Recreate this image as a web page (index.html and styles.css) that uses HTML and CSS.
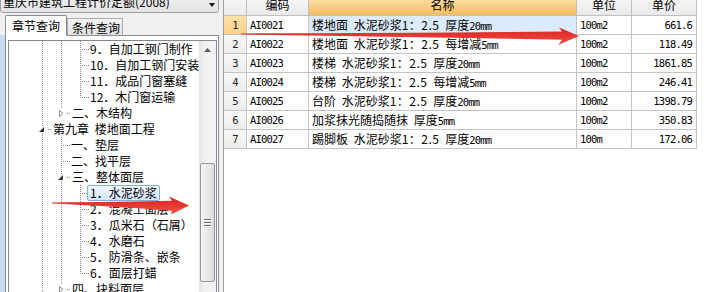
FILE: index.html
```html
<!DOCTYPE html>
<html lang="zh-CN">
<head>
<meta charset="utf-8">
<title>定额查询</title>
<link rel="stylesheet" href="styles.css">
</head>
<body>
<div class="app">
  <aside class="left">
    <div class="combo">
      <span class="combo-text">重庆市建筑工程计价定额(2008)</span>
      <span class="combo-arrow"></span>
    </div>
    <div class="tabs">
      <div class="tab active">章节查询</div>
      <div class="tab">条件查询</div>
    </div>
    <div class="tab-body">
      <div class="tree-box">
        <div class="tree">
          <div class="row"><i class="g v"></i><i class="g v"></i><i class="g t"></i><span>9．自加工钢门制作</span></div>
          <div class="row"><i class="g v"></i><i class="g v"></i><i class="g t"></i><span>10．自加工钢门安装</span></div>
          <div class="row"><i class="g v"></i><i class="g v"></i><i class="g t"></i><span>11．成品门窗塞缝</span></div>
          <div class="row"><i class="g v"></i><i class="g v"></i><i class="g l"></i><span>12．木门窗运输</span></div>
          <div class="row"><i class="g v"></i><i class="g xc-end"><svg class="ico-closed" width="5" height="7" viewBox="0 0 5 7"><polygon points="0.5,0.5 4,3.5 0.5,6.5" fill="#fff" stroke="#8c8c8c"/></svg></i><span class="after-x">二、木结构</span></div>
          <div class="row"><i class="g xo"><svg class="ico-open" width="5" height="5" viewBox="0 0 5 5"><polygon points="5,0 5,5 0,5" fill="#333"/></svg></i><span class="after-x">第九章 楼地面工程</span></div>
          <div class="row"><i class="g v"></i><i class="g t"></i><span>一、垫层</span></div>
          <div class="row"><i class="g v"></i><i class="g t"></i><span>二、找平层</span></div>
          <div class="row"><i class="g v"></i><i class="g xo"><svg class="ico-open" width="5" height="5" viewBox="0 0 5 5"><polygon points="5,0 5,5 0,5" fill="#333"/></svg></i><span class="after-x">三、整体面层</span></div>
          <div class="row"><i class="g v"></i><i class="g v"></i><i class="g t"></i><span class="sel">1．水泥砂浆</span></div>
          <div class="row"><i class="g v"></i><i class="g v"></i><i class="g t"></i><span>2．混凝土面层</span></div>
          <div class="row"><i class="g v"></i><i class="g v"></i><i class="g t"></i><span>3．瓜米石（石屑）</span></div>
          <div class="row"><i class="g v"></i><i class="g v"></i><i class="g t"></i><span>4．水磨石</span></div>
          <div class="row"><i class="g v"></i><i class="g v"></i><i class="g t"></i><span>5．防滑条、嵌条</span></div>
          <div class="row"><i class="g v"></i><i class="g v"></i><i class="g l"></i><span>6．面层打蜡</span></div>
          <div class="row"><i class="g v"></i><i class="g xc"><svg class="ico-closed" width="5" height="7" viewBox="0 0 5 7"><polygon points="0.5,0.5 4,3.5 0.5,6.5" fill="#fff" stroke="#8c8c8c"/></svg></i><span class="after-x">四、块料面层</span></div>
        </div>
        <div class="vscroll">
          <div class="sb-up"><svg width="7" height="4" viewBox="0 0 7 4"><polygon points="0,4 3.5,0 7,4" fill="#5a5a5a"/></svg></div>
          <div class="sb-thumb"><svg width="8" height="8" viewBox="0 0 8 8"><path d="M0 0.5H7M0 3.5H7M0 6.5H7" stroke="#6a6a6a"/><path d="M1 1.5H8M1 4.5H8M1 7.5H8" stroke="#fbfbfb"/></svg></div>
        </div>
      </div>
    </div>
  </aside>
  <div class="splitter"></div>
  <main class="grid-pane">
    <div class="grid">
      <div class="c h rh"></div>
      <div class="c h">编码</div>
      <div class="c h hot">名称</div>
      <div class="c h">单位</div>
      <div class="c h">单价</div>

      <div class="c rh cur num">1</div>
      <div class="c num">AI0021</div>
      <div class="c name selc">楼地面 水泥砂浆<span class="ratio">1：2.5</span> 厚度<span class="num">20mm</span></div>
      <div class="c num">100m2</div>
      <div class="c num r">661.6</div>

      <div class="c rh num">2</div>
      <div class="c num">AI0022</div>
      <div class="c name">楼地面 水泥砂浆<span class="ratio">1：2.5</span> 每增减<span class="num">5mm</span></div>
      <div class="c num">100m2</div>
      <div class="c num r">118.49</div>

      <div class="c rh num">3</div>
      <div class="c num">AI0023</div>
      <div class="c name">楼梯 水泥砂浆<span class="ratio">1：2.5</span> 厚度<span class="num">20mm</span></div>
      <div class="c num">100m2</div>
      <div class="c num r">1861.85</div>

      <div class="c rh num">4</div>
      <div class="c num">AI0024</div>
      <div class="c name">楼梯 水泥砂浆<span class="ratio">1：2.5</span> 每增减<span class="num">5mm</span></div>
      <div class="c num">100m2</div>
      <div class="c num r">246.41</div>

      <div class="c rh num">5</div>
      <div class="c num">AI0025</div>
      <div class="c name">台阶 水泥砂浆<span class="ratio">1：2.5</span> 厚度<span class="num">20mm</span></div>
      <div class="c num">100m2</div>
      <div class="c num r">1398.79</div>

      <div class="c rh num">6</div>
      <div class="c num">AI0026</div>
      <div class="c name">加浆抹光随捣随抹 厚度<span class="num">5mm</span></div>
      <div class="c num">100m2</div>
      <div class="c num r">350.83</div>

      <div class="c rh num">7</div>
      <div class="c num">AI0027</div>
      <div class="c name">踢脚板 水泥砂浆<span class="ratio">1：2.5</span> 厚度<span class="num">20mm</span></div>
      <div class="c num">100m</div>
      <div class="c num r">172.06</div>
    </div>
  </main>
  <svg class="arrows" width="706" height="292" viewBox="0 0 706 292">
    <defs>
      <linearGradient id="red" x1="0" y1="0" x2="0" y2="1">
        <stop offset="0" stop-color="#d9211c"/>
        <stop offset="1" stop-color="#f2504a"/>
      </linearGradient>
    </defs>
    <path d="M241 33.4 Q420 33 562 31.5 L559 27.5 L579 36 L558 45 L562 39.8 Q420 37 241 34.5 Z" fill="url(#red)"/>
    <path d="M52 202.4 Q120 202 172 200.8 L169 196.5 L189 205.5 L171 214.5 L172 210.8 Q120 206.5 52 203.4 Z" fill="url(#red)"/>
  </svg>
</div>
</body>
</html>
```
FILE: styles.css
```css
* { box-sizing: border-box; margin: 0; padding: 0; }
html, body { width: 706px; height: 292px; overflow: hidden; }
body {
  font-family: "Noto Sans CJK SC", "Noto Sans", sans-serif;
  font-size: 12px;
  color: #000;
  background: #f0f0f0;
}
.app { display: flex; height: 292px; position: relative; }

/* ---------- left pane ---------- */
.left {
  width: 219px; flex: none;
  display: flex; flex-direction: column;
  background: #f0f0f0;
}
.combo {
  margin-top: -10px; height: 23px; flex: none;
  border: 1px solid #9aa0aa; border-radius: 3px;
  background: linear-gradient(#f4f4f4, #e4e4e4);
  display: flex; align-items: center;
  padding-left: 2px; line-height: 17px;
}
.combo-text { flex: 1; white-space: nowrap; overflow: hidden; }
.combo-arrow {
  width: 0; height: 0;
  border-left: 3.5px solid transparent; border-right: 3.5px solid transparent;
  border-top: 4px solid #111;
  margin: 6px 3px 0 0;
}
.tabs {
  height: 22px; flex: none;
  display: flex; align-items: flex-end;
  padding-left: 5px;
}
.tab {
  height: 17px; line-height: 17px;
  padding: 0 2px 0 4px;
  border: 1px solid #acacac; border-bottom: none;
  background: linear-gradient(#f3f3f3, #e3e3e3);
  white-space: nowrap;
}
.tab.active {
  height: 21px; line-height: 19px;
  padding: 0 6px; margin-bottom: -1px;
  background: #fff; border-color: #898c95;
  border-radius: 2px 2px 0 0;
  position: relative; z-index: 1;
}
.tab-body {
  flex: 1; min-height: 0;
  margin-left: 5px;
  border: 1px solid #898c95; border-bottom: none;
  background: #fff;
  padding: 4px 1px 0 2px;
  box-shadow: -5px 0 0 #c9dbf0;
  display: flex; flex-direction: column;
}
.tree-box {
  flex: 1; min-height: 0;
  border: 1px solid #828790; border-bottom: none;
  display: flex;
}
.tree {
  flex: 1; min-width: 0; overflow: hidden;
  padding-left: 24px;
  word-spacing: 3px;
  --dv: repeating-linear-gradient(to bottom, #8e8e8e 0 1px, transparent 1px 2px);
  --dh: repeating-linear-gradient(to right, #8e8e8e 0 1px, transparent 1px 2px);
}
.row { display: flex; height: 16px; line-height: 16px; white-space: nowrap; }
.g { width: 19px; height: 16px; flex: none; background-repeat: no-repeat; }
.g.v {
  background-image: var(--dv);
  background-size: 1px 16px;
  background-position: 9px 0;
}
.g.t {
  background-image: var(--dv), var(--dh);
  background-size: 1px 16px, 7px 1px;
  background-position: 9px 0, 11px 8px;
}
.g.l {
  background-image: var(--dv), var(--dh);
  background-size: 1px 9px, 7px 1px;
  background-position: 9px 0, 11px 8px;
}
.g.xo {
  background-image: var(--dv), var(--dv), var(--dh);
  background-size: 1px 5px, 1px 4px, 3px 1px;
  background-position: 9px 0, 9px 12px, 15px 8px;
}
.g.xc {
  background-image: var(--dv), var(--dv), var(--dh);
  background-size: 1px 4px, 1px 4px, 3px 1px;
  background-position: 9px 0, 9px 12px, 15px 8px;
}
.g.xc-end {
  background-image: var(--dv), var(--dh);
  background-size: 1px 4px, 3px 1px;
  background-position: 9px 0, 15px 8px;
}
.ico-open { display: block; margin: 6px 0 0 6px; }
.ico-closed { display: block; margin: 5px 0 0 7px; }
.after-x { margin-left: 1px; }
.sel {
  margin-left: -3px; padding: 0 2px;
  border: 1px solid #84acdd; border-radius: 2px;
  background: linear-gradient(#f3f8ff, #d2e5fb);
  line-height: 14px;
}
.vscroll {
  width: 17px; flex: none;
  background: linear-gradient(to right, #e4e4e4, #f1f1f1 35%, #f3f3f3);
  display: flex; flex-direction: column; align-items: center;
}
.sb-up { width: 17px; height: 17px; flex: none; display: flex; align-items: center; justify-content: center; }
.sb-thumb {
  margin-top: 105px; width: 15px; height: 119px; flex: none;
  border: 1px solid #979797; border-radius: 2px;
  background: linear-gradient(to right, #f5f5f5, #e9e9e9 50%, #d9d9d9);
  display: flex; align-items: center; justify-content: center;
}

/* ---------- right pane ---------- */
.splitter { width: 4px; flex: none; background: #f0f0f0; }
.grid-pane { flex: 1; min-width: 0; background: #fff; border-left: 1px solid #a0a0a0; }
.grid {
  display: grid;
  grid-template-columns: 23px 62px 268px 55px 65px;
  grid-template-rows: 21px repeat(7, 19px);
  margin-top: -5px; width: 473px;
}
.c {
  border-right: 1px solid #c4c4c4; border-bottom: 1px solid #c4c4c4;
  padding: 0 3px; line-height: 18px;
  white-space: nowrap; overflow: hidden;
}
.h {
  background: linear-gradient(#fafafa, #e9e9e9);
  text-align: center; line-height: 20px;
  border-color: #c0c0c0;
}
.h.hot { background: linear-gradient(#fde6b8, #f3bd5c); }
.rh {
  background: linear-gradient(#f8f8f8, #ececec);
  text-align: center; padding: 0; color: #222;
}
.rh.cur { background: linear-gradient(#ffe0a6, #fdd08a); }
.num {
  font-family: "DejaVu Sans Mono", "Liberation Mono", monospace;
  font-size: 10.5px; letter-spacing: -0.8px;
}
.name { word-spacing: 3px; }
.ratio { letter-spacing: 0.5px; word-spacing: 0; }
.r { text-align: right; padding-right: 4px; }
.selc { background: #dcebfc; }

/* ---------- annotation arrows ---------- */
.arrows { position: absolute; left: 0; top: 0; pointer-events: none; }
```
